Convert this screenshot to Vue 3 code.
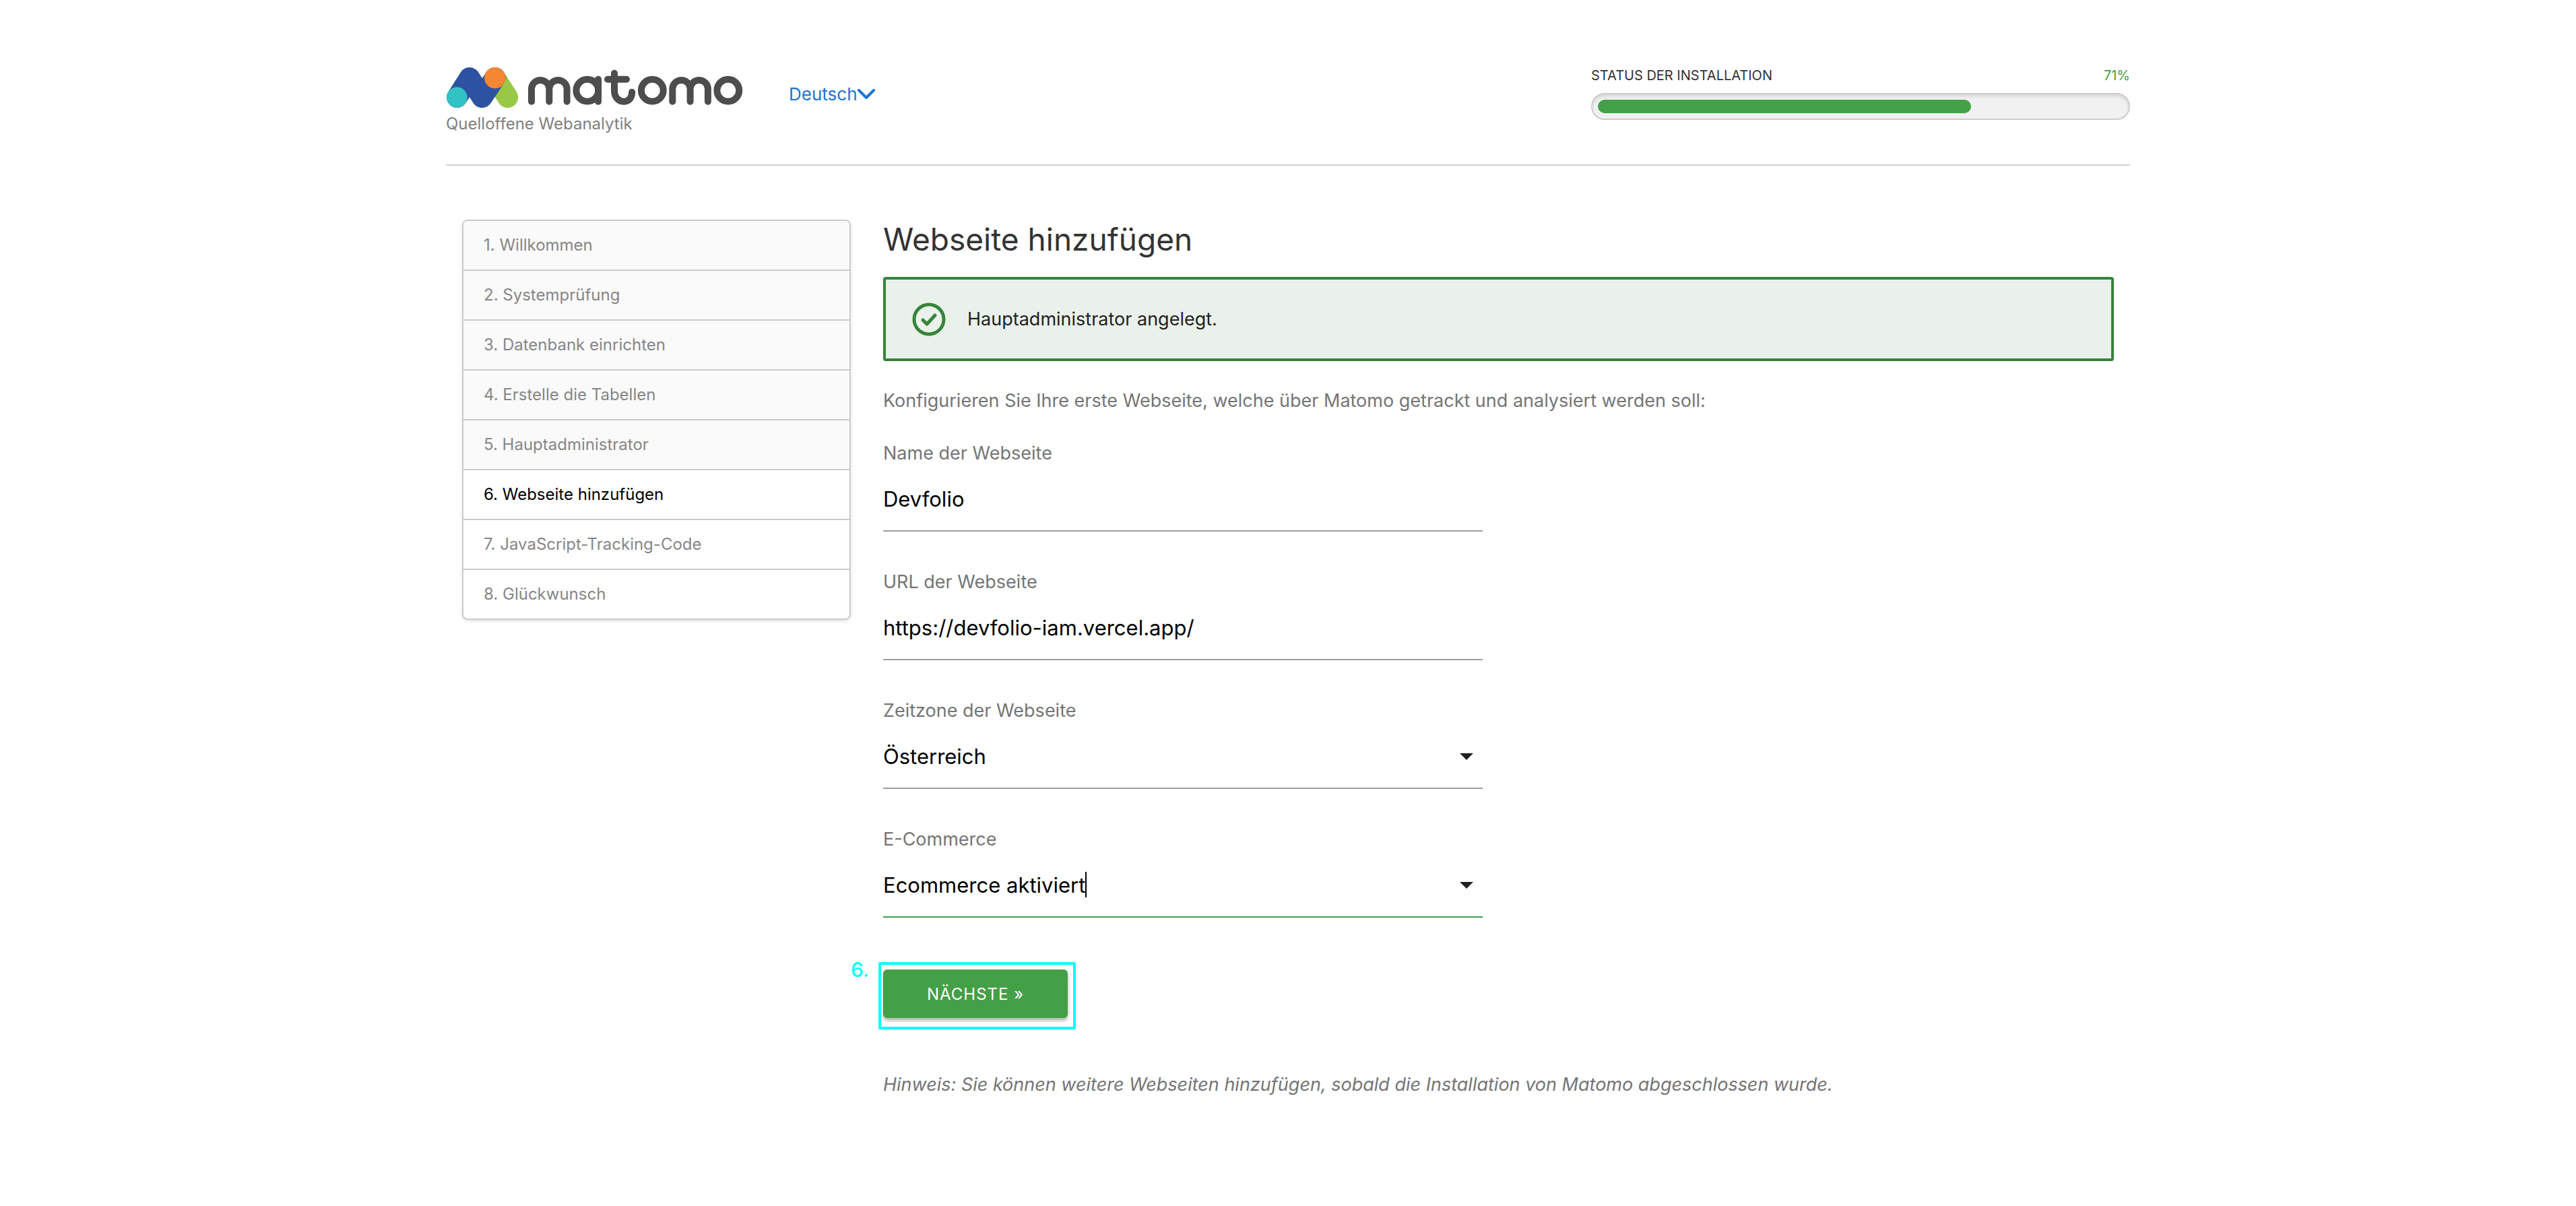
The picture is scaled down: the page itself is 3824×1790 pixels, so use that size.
<script setup>
import { ref } from 'vue'

const progress = ref(71)
const current = 6
const steps = [
  'Willkommen',
  'Systemprüfung',
  'Datenbank einrichten',
  'Erstelle die Tabellen',
  'Hauptadministrator',
  'Webseite hinzufügen',
  'JavaScript-Tracking-Code',
  'Glückwunsch',
]
const siteName = ref('Devfolio')
const siteUrl = ref('https://devfolio-iam.vercel.app/')
const timezone = ref('Österreich')
const ecommerce = ref('Ecommerce aktiviert')
</script>

<template>
  <div class="container">
    <header class="header">
      <div class="brand">
        <svg class="logo" viewBox="-1 0 442 60" role="img" aria-label="Matomo">
          <defs>
            <linearGradient id="leaf" gradientUnits="userSpaceOnUse" x1="73" y1="36" x2="83" y2="42">
              <stop offset="0" stop-color="#6c9434" />
              <stop offset="0.4" stop-color="#98c846" />
            </linearGradient>
          </defs>
          <g fill="none" stroke-width="31" stroke-linecap="round" stroke-linejoin="round">
            <path d="M71.8 15.5 90.6 44.5" stroke="url(#leaf)" />
            <path d="M15.5 44.5 34 15.5 52.7 44.5 71.8 15.5" stroke="#2d52a1" />
          </g>
          <circle cx="15.3" cy="44.6" r="15.3" fill="#32c2c4" />
          <circle cx="71.8" cy="15.6" r="15.7" fill="#f58634" />
          <g fill="none" stroke="#4d4d4d" stroke-width="10" stroke-linecap="round">
            <path d="M126 50.7V31a13.2 13.2 0 0 1 26.3 0V50.7M152.3 31a13.2 13.2 0 0 1 26.3 0V50.7" />
            <circle cx="208.8" cy="34.2" r="16.4" />
            <path d="M225 17.7V50.7" />
            <path d="M239 17.7H267M249 8.7V34.5C249 44 255 50.7 263 50.7S275 45 275.2 36.7" />
            <circle cx="305.3" cy="34.2" r="16.4" />
            <path d="M335.3 50.7V31a13.2 13.2 0 0 1 26.3 0V50.7M361.6 31a13.2 13.2 0 0 1 26.3 0V50.7" />
            <circle cx="417.8" cy="34.2" r="16.4" />
          </g>
        </svg>
        <p class="tagline">Quelloffene Webanalytik</p>
      </div>

      <a class="language" href="#">Deutsch<svg class="chevron" viewBox="0 0 26 16" aria-hidden="true"><path d="M2 2 13 13 24 2" /></svg></a>

      <div class="status">
        <div class="status-text">
          <span>STATUS DER INSTALLATION</span>
          <span class="percent">{{ progress }}%</span>
        </div>
        <div class="track">
          <div class="fill" :style="{ width: progress + '%' }"></div>
        </div>
      </div>
    </header>

    <div class="columns">
      <nav class="side">
        <ol class="steps">
          <li
            v-for="(step, i) in steps"
            :key="step"
            :class="{ done: i + 1 < current, active: i + 1 === current }"
          >{{ i + 1 }}. {{ step }}</li>
        </ol>
      </nav>

      <main class="content">
        <h1>Webseite hinzufügen</h1>
        <div class="alert" role="status">
          <svg class="check" viewBox="0 0 50 50" aria-hidden="true">
            <circle cx="25" cy="25" r="22" />
            <path d="M16 26 22 32 34 19" />
          </svg>
          <span>Hauptadministrator angelegt.</span>
        </div>
        <p class="intro">Konfigurieren Sie Ihre erste Webseite, welche über Matomo getrackt und analysiert werden soll:</p>

        <form @submit.prevent>
          <div class="fields">
            <div class="field">
              <label for="name">Name der Webseite</label>
              <input id="name" v-model="siteName" type="text" />
            </div>
            <div class="field">
              <label for="url">URL der Webseite</label>
              <input id="url" v-model="siteUrl" type="text" />
            </div>
            <div class="field">
              <label for="timezone">Zeitzone der Webseite</label>
              <div class="select">
                <select id="timezone" v-model="timezone">
                  <option>Österreich</option>
                </select>
                <svg class="arrow" viewBox="0 0 20 10" aria-hidden="true"><path d="M0 0H20L10 10Z" /></svg>
              </div>
            </div>
            <div class="field focused">
              <label for="ecommerce">E-Commerce</label>
              <div class="select">
                <select id="ecommerce" v-model="ecommerce">
                  <option>Ecommerce aktiviert</option>
                </select>
                <svg class="arrow" viewBox="0 0 20 10" aria-hidden="true"><path d="M0 0H20L10 10Z" /></svg>
                <span class="caret"></span>
              </div>
            </div>
          </div>

          <div class="submit">
            <button type="submit">NÄCHSTE »</button>
            <span class="marker"></span>
            <span class="marker-label">6.</span>
          </div>
        </form>

        <p class="note">Hinweis: Sie können weitere Webseiten hinzufügen, sobald die Installation von Matomo abgeschlossen wurde.</p>
      </main>
    </div>
  </div>
</template>

<style>
body {
  background: #fff;
}
</style>

<style scoped>
.container {
  box-sizing: border-box;
  max-width: 2500px;
  margin: 0 auto;
  padding-bottom: 80px;
  font-family: Inter, "Liberation Sans", sans-serif;
  font-size: 27px;
  line-height: 40px;
  color: #757575;
}

p,
h1,
ol {
  margin: 0;
  padding: 0;
}

.header {
  display: flex;
  align-items: flex-start;
  padding: 100px 0 44px;
  border-bottom: 2px solid #ccc;
}

.logo {
  display: block;
  width: 442px;
  height: 60px;
}

.brand {
  width: 509px;
}

.tagline {
  margin-top: 8px;
  font-size: 24px;
  line-height: 32px;
  color: #808080;
}

.language {
  display: flex;
  align-items: center;
  margin-top: 24px;
  font-size: 26px;
  line-height: 32px;
  color: #1976d2;
  text-decoration: none;
}

.chevron {
  width: 26px;
  height: 16px;
  fill: none;
  stroke: #1976d2;
  stroke-width: 4;
  stroke-linecap: round;
  stroke-linejoin: round;
}

.status {
  width: 32%;
  margin-left: auto;
}

.status-text {
  display: flex;
  justify-content: space-between;
  font-size: 20px;
  line-height: 24px;
  color: #333;
}

.percent {
  color: #43a047;
}

.track {
  box-sizing: border-box;
  height: 40px;
  margin-top: 14px;
  padding: 8px;
  border: 2px solid #ccc;
  border-radius: 20px;
  background: #f1f1f1;
  box-shadow: inset 0 4px 6px -2px rgba(0, 0, 0, 0.15);
}

.fill {
  height: 20px;
  border-radius: 10px;
  background: #43a047;
}

.columns {
  display: flex;
  align-items: flex-start;
  padding-top: 80px;
}

.side {
  box-sizing: border-box;
  width: 25%;
  padding: 0 24px;
}

.steps {
  overflow: hidden;
  border: 2px solid #ccc;
  border-radius: 8px;
  list-style: none;
  font-size: 24px;
  line-height: 32px;
  color: #868686;
  box-shadow: 0 2px 4px rgba(0, 0, 0, 0.12);
}

.steps li {
  padding: 20px 30px;
  border-bottom: 2px solid #ccc;
}

.steps li:last-child {
  border-bottom: 0;
}

.steps .done {
  background: #fafafa;
}

.steps .active {
  color: #000;
}

.content {
  box-sizing: border-box;
  width: 75%;
  padding: 0 24px;
}

h1 {
  font-size: 46px;
  font-weight: 400;
  line-height: 58px;
  color: #333;
}

.alert {
  box-sizing: border-box;
  display: flex;
  align-items: center;
  gap: 32px;
  min-height: 125px;
  margin-top: 27px;
  padding: 0 39px;
  border: 4px solid #37833b;
  border-radius: 4px;
  background: #eaf1ea;
  color: #212121;
}

.check {
  width: 50px;
  height: 50px;
  fill: none;
  stroke: #37833b;
  stroke-width: 5;
  stroke-linecap: round;
  stroke-linejoin: round;
}

.intro {
  margin-top: 39px;
}

.fields {
  display: flex;
  flex-direction: column;
  gap: 55px;
  width: calc(50% - 24px);
  margin-top: 38px;
}

.field label {
  display: block;
}

.field input,
.field select {
  box-sizing: border-box;
  display: block;
  width: 100%;
  height: 96px;
  margin: 0;
  padding: 0;
  border: 0;
  border-bottom: 2px solid #9e9e9e;
  border-radius: 0;
  outline: 0;
  appearance: none;
  background: transparent;
  font-family: inherit;
  font-size: 31px;
  color: #000;
}

.field.focused select {
  border-bottom-color: #43a047;
}

.select {
  position: relative;
}

.arrow {
  position: absolute;
  top: 43px;
  right: 14px;
  width: 20px;
  height: 10px;
  fill: #212121;
  pointer-events: none;
}

.caret {
  position: absolute;
  top: 28px;
  left: 300px;
  width: 2px;
  height: 38px;
  background: #000;
}

.submit {
  position: relative;
  width: fit-content;
  margin-top: 77px;
}

button {
  display: block;
  height: 72px;
  padding: 0 65px;
  border: 0;
  border-radius: 6px;
  background: #43a047;
  box-shadow: 0 4px 4px rgba(0, 0, 0, 0.2), 0 2px 10px rgba(0, 0, 0, 0.14);
  font-family: inherit;
  font-size: 24px;
  letter-spacing: 1px;
  color: #fff;
}

.marker {
  position: absolute;
  inset: -11px -12px -17px -7px;
  border: 4px solid #0ff;
  border-radius: 2px;
  pointer-events: none;
}

.marker-label {
  position: absolute;
  top: -20px;
  right: 100%;
  margin-right: 21px;
  font-size: 30px;
  font-weight: 500;
  color: #0ff;
}

.note {
  margin-top: 79px;
  font-style: italic;
}
</style>
